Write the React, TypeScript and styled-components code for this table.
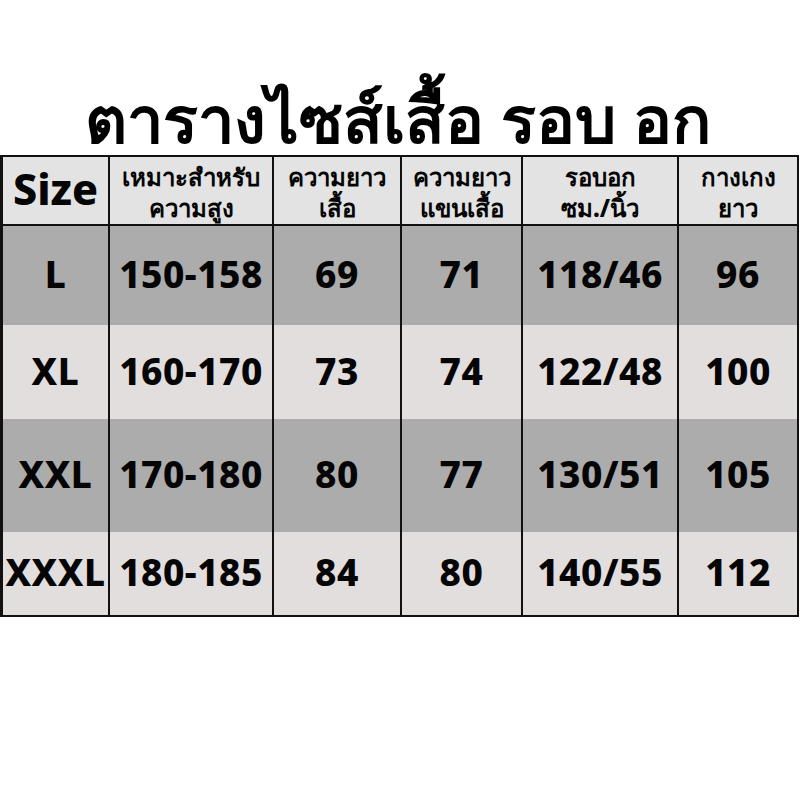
import React from "react";
import styled, { createGlobalStyle } from "styled-components";

const Global = createGlobalStyle`
  html, body { margin: 0; padding: 0; background: #ffffff; }
  body { font-family: "Noto Sans", "DejaVu Sans", sans-serif; color: #0a0a0a; }
`;

const Page = styled.div`
  width: 800px;
  height: 800px;
  background: #ffffff;
  display: flex;
  flex-direction: column;
`;

const Title = styled.h1`
  margin: 0;
  height: 155px;
  display: flex;
  align-items: flex-end;
  justify-content: center;
  padding-bottom: 4px;
  padding-right: 4px;
  box-sizing: border-box;
  font-size: 65px;
  font-weight: 900;
  line-height: 1;
  color: #000;
`;

const Table = styled.div`
  width: 799px;
  box-sizing: border-box;
  border-top: 2px solid #111;
  border-left: 3px solid #111;
  border-right: 2px solid #111;
  border-bottom: 2px solid #111;
  display: grid;
  grid-template-columns: 105px 164px 128px 121px 156px 120px;
  grid-template-rows: 69px 99px 94px 113px 83px;
`;

const Cell = styled.div<{ $bg: string; $first?: boolean; $head?: boolean }>`
  box-sizing: border-box;
  background: ${(p) => p.$bg};
  border-left: ${(p) => (p.$first ? "none" : "2px solid #111")};
  border-bottom: ${(p) => (p.$head ? "2px solid #111" : "none")};
  display: flex;
  align-items: center;
  justify-content: center;
  text-align: center;
  font-weight: 800;
  color: #050505;
`;

const DataText = styled.span`
  font-size: 37px;
  line-height: 1;
  letter-spacing: 0.5px;
  margin-top: -4px;
`;

const HeadText = styled.span`
  font-size: 24px;
  line-height: 31px;
  white-space: pre-line;
  margin-top: 2px;
`;

const SizeText = styled.span`
  font-size: 43px;
  line-height: 1;
  margin-top: -4px;
`;

const HEAD_BG = "#e3e3e3";
const GRAY = "#acacac";
const LIGHT = "#e2dede";

const headers = [
  "เหมาะสำหรับ\nความสูง",
  "ความยาว\nเสื้อ",
  "ความยาว\nแขนเสื้อ",
  "รอบอก\nซม./นิ้ว",
  "กางเกง\nยาว",
];

const rows = [
  ["L", "150-158", "69", "71", "118/46", "96"],
  ["XL", "160-170", "73", "74", "122/48", "100"],
  ["XXL", "170-180", "80", "77", "130/51", "105"],
  ["XXXL", "180-185", "84", "80", "140/55", "112"],
];

export default function App() {
  return (
    <Page>
      <Global />
      <Title>ตารางไซส์เสื้อ รอบ อก</Title>
      <Table>
        <Cell $bg={HEAD_BG} $first $head>
          <SizeText>Size</SizeText>
        </Cell>
        {headers.map((h) => (
          <Cell key={h} $bg={HEAD_BG} $head>
            <HeadText>{h}</HeadText>
          </Cell>
        ))}
        {rows.map((r, i) =>
          r.map((v, j) => (
            <Cell key={`${i}-${j}`} $bg={i % 2 === 0 ? GRAY : LIGHT} $first={j === 0}>
              <DataText>{v}</DataText>
            </Cell>
          ))
        )}
      </Table>
    </Page>
  );
}
